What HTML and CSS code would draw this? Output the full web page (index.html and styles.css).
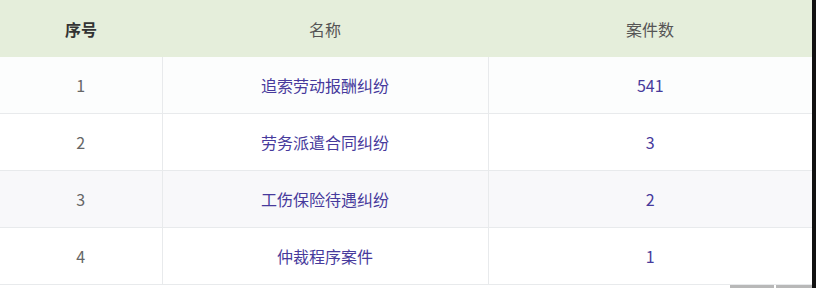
FILE: index.html
```html
<!DOCTYPE html>
<html lang="zh">
<head>
<meta charset="utf-8">
<link rel="stylesheet" href="styles.css">
</head>
<body>
<div class="page">
  <div class="wrap">
    <table class="tbl">
      <colgroup><col class="c1"><col class="c2"><col class="c3"></colgroup>
      <thead>
        <tr><th class="bold">序号</th><th>名称</th><th>案件数</th></tr>
      </thead>
      <tbody>
        <tr><td>1</td><td class="link">追索劳动报酬纠纷</td><td class="link">541</td></tr>
        <tr><td>2</td><td class="link">劳务派遣合同纠纷</td><td class="link">3</td></tr>
        <tr><td>3</td><td class="link">工伤保险待遇纠纷</td><td class="link">2</td></tr>
        <tr><td>4</td><td class="link">仲裁程序案件</td><td class="link">1</td></tr>
      </tbody>
    </table>
    <div class="scroll"><div class="thumb"></div><div class="thumb short"></div></div>
  </div>
  <div class="edge"></div>
</div>
</body>
</html>
```
FILE: styles.css
```css
html, body { margin: 0; padding: 0; background: #fff; }
body { font-family: "Noto Sans CJK SC", "Noto Sans", sans-serif; }
.page { display: flex; width: 816px; height: 288px; overflow: hidden; }
.wrap { width: 812px; display: flex; flex-direction: column; }
.edge { width: 4px; background: #111; }
.tbl { width: 812px; border-collapse: collapse; table-layout: fixed; font-size: 16px; }
.c1 { width: 162px; }
.c2 { width: 326px; }
.c3 { width: 324px; }
thead th { height: 57px; background: #e5eedb; color: #555; font-weight: normal; text-align: center; padding: 0; }
thead th.bold { font-weight: bold; color: #333; }
tbody td { height: 56px; border-bottom: 1px solid #e8eaec; text-align: center; color: #666; padding: 0; background: #fcfdfd; }
tbody td + td { border-left: 1px solid #e8eaec; }
tbody tr:nth-child(even) td { background: #fff; }
tbody tr:nth-child(3) td { background: #f8f8fa; }
td.link { color: #473a9c; }
.scroll { height: 3px; display: flex; justify-content: flex-end; gap: 2px; }
.thumb { width: 44px; height: 3px; background: #b8b8b8; }
.thumb.short { width: 36px; }
```
